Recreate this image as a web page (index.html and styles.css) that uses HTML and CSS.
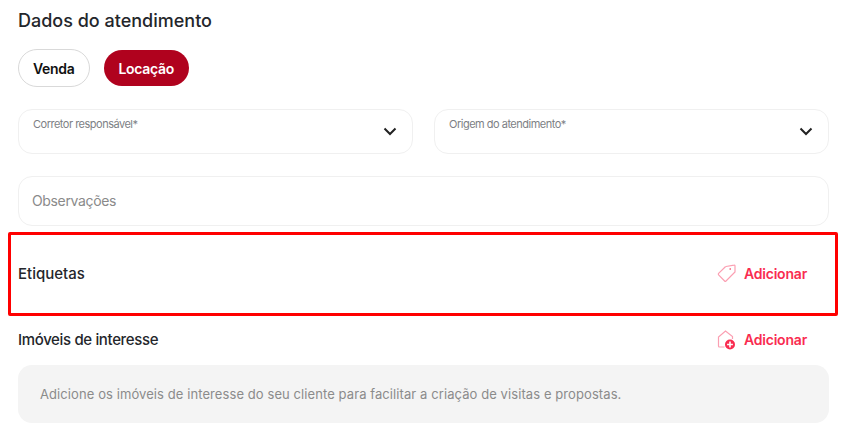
FILE: index.html
```html
<!DOCTYPE html>
<html lang="pt-BR">
<head>
    <meta charset="UTF-8">
    <title>Dados do atendimento</title>
    <link rel="stylesheet" href="styles.css">
</head>
<body>
    <div class="form">
        <h2 class="title">Dados do atendimento</h2>
        <div class="deal-types">
            <button class="pill">Venda</button>
            <button class="pill pill-active">Locação</button>
        </div>
        <div class="select-row">
            <div class="field select">
                <span class="field-label">Corretor responsável*</span>
                <svg class="chevron" width="14" height="9" viewBox="0 0 14 9"><path d="M1.5 1.5 7 7l5.5-5.5" fill="none" stroke="#222" stroke-width="2"/></svg>
            </div>
            <div class="field select">
                <span class="field-label">Origem do atendimento*</span>
                <svg class="chevron" width="14" height="9" viewBox="0 0 14 9"><path d="M1.5 1.5 7 7l5.5-5.5" fill="none" stroke="#222" stroke-width="2"/></svg>
            </div>
        </div>
        <div class="field notes">Observações</div>

        <!-- Etiquetas -->
        <div class="section-row highlighted">
            <span class="section-title">Etiquetas</span>
            <a class="add-link">
                <svg width="20" height="20" viewBox="0 0 20 20" fill="none" stroke="#fb9fb2" stroke-width="1.2"><path d="M1.6 9.4 8.4 2.8a1 1 0 0 1 .6-.3l8-1.4a.8.8 0 0 1 1 .8V8l-9 9a1 1 0 0 1-1.4 0l-6-6.2a1 1 0 0 1 0-1.4z"/><circle cx="13.2" cy="5" r=".8" fill="#f92c50" stroke="none"/></svg>
                Adicionar
            </a>
        </div>

        <!-- Imoveis de interesse -->
        <div class="section-row">
            <span class="section-title">Imóveis de interesse</span>
            <a class="add-link">
                <svg width="20" height="20" viewBox="0 0 20 20" fill="none"><path d="M7.5 17H2.5a1 1 0 0 1-1-1V7L8.5 1l7 5.5V9" stroke="#fb9fb2" stroke-width="1.2"/><circle cx="13" cy="14.5" r="5" fill="#f92c50"/><path d="M13 11.6v5.8M10.1 14.5h5.8" stroke="#fff" stroke-width="1.6"/></svg>
                Adicionar
            </a>
        </div>
        <div class="empty-note">Adicione os imóveis de interesse do seu cliente para facilitar a criação de visitas e propostas.</div>
    </div>
</body>
</html>
```

FILE: styles.css
```css
body {
    margin: 0;
    background-color: #fff;
    font-family: Inter, "Noto Sans", sans-serif;
    color: #24262b;
}
.form {
    padding: 10px 17px 0 18px;
}
.title {
    margin: 0;
    font-size: 18px;
    line-height: 22px;
    font-weight: 500;
}
.deal-types {
    display: flex;
    align-items: center;
    gap: 14px;
    margin-top: 17px;
}
.pill {
    height: 38px;
    padding: 0 14px;
    background-color: #fff;
    border: 1px solid #d9d9d9;
    border-radius: 19px;
    color: #111;
    font-family: inherit;
    font-size: 14px;
    font-weight: 600;
    letter-spacing: -0.3px;
}
.pill-active {
    height: 36px;
    padding: 0 15px;
    background-color: #b0021e;
    border: none;
    color: #fff;
}
.select-row {
    display: flex;
    gap: 21px;
    margin-top: 22px;
}
.field {
    box-sizing: border-box;
    border: 1px solid #f0f0f0;
    border-radius: 14px;
}
.select {
    flex: 1;
    display: flex;
    justify-content: space-between;
    height: 45px;
    padding: 7px 15px 0 14px;
}
.field-label {
    font-size: 11px;
    line-height: 14px;
    letter-spacing: -0.5px;
    color: #7d7f85;
}
.chevron {
    margin-top: 10px;
}
.notes {
    height: 50px;
    margin-top: 22px;
    padding-left: 13px;
    font-size: 14px;
    line-height: 48px;
    letter-spacing: -0.35px;
    color: #8a8a8a;
}
.section-row {
    display: flex;
    justify-content: space-between;
    align-items: center;
    padding-right: 22px;
}
.section-title {
    font-size: 15px;
    line-height: 18px;
    font-weight: 500;
    letter-spacing: -0.35px;
}
.highlighted {
    box-sizing: border-box;
    height: 84px;
    margin: 6px -9px 0 -10px;
    padding-left: 7px;
    padding-right: 28px;
    padding-bottom: 1px;
    border: 3px solid #ff0000;
    border-radius: 2px;
}
.highlighted .section-title {
    letter-spacing: 0;
}
.highlighted + .section-row {
    margin-top: 14px;
    height: 20px;
}
.add-link {
    display: flex;
    align-items: center;
    gap: 7px;
    color: #f92c50;
    font-size: 14px;
    line-height: 20px;
    font-weight: 600;
    letter-spacing: -0.2px;
}
.empty-note {
    box-sizing: border-box;
    height: 58px;
    margin-top: 15px;
    padding-left: 22px;
    background-color: #f4f4f4;
    border-radius: 14px;
    font-size: 13px;
    line-height: 58px;
    letter-spacing: 0.085px;
    color: #8b8b8b;
}
```
